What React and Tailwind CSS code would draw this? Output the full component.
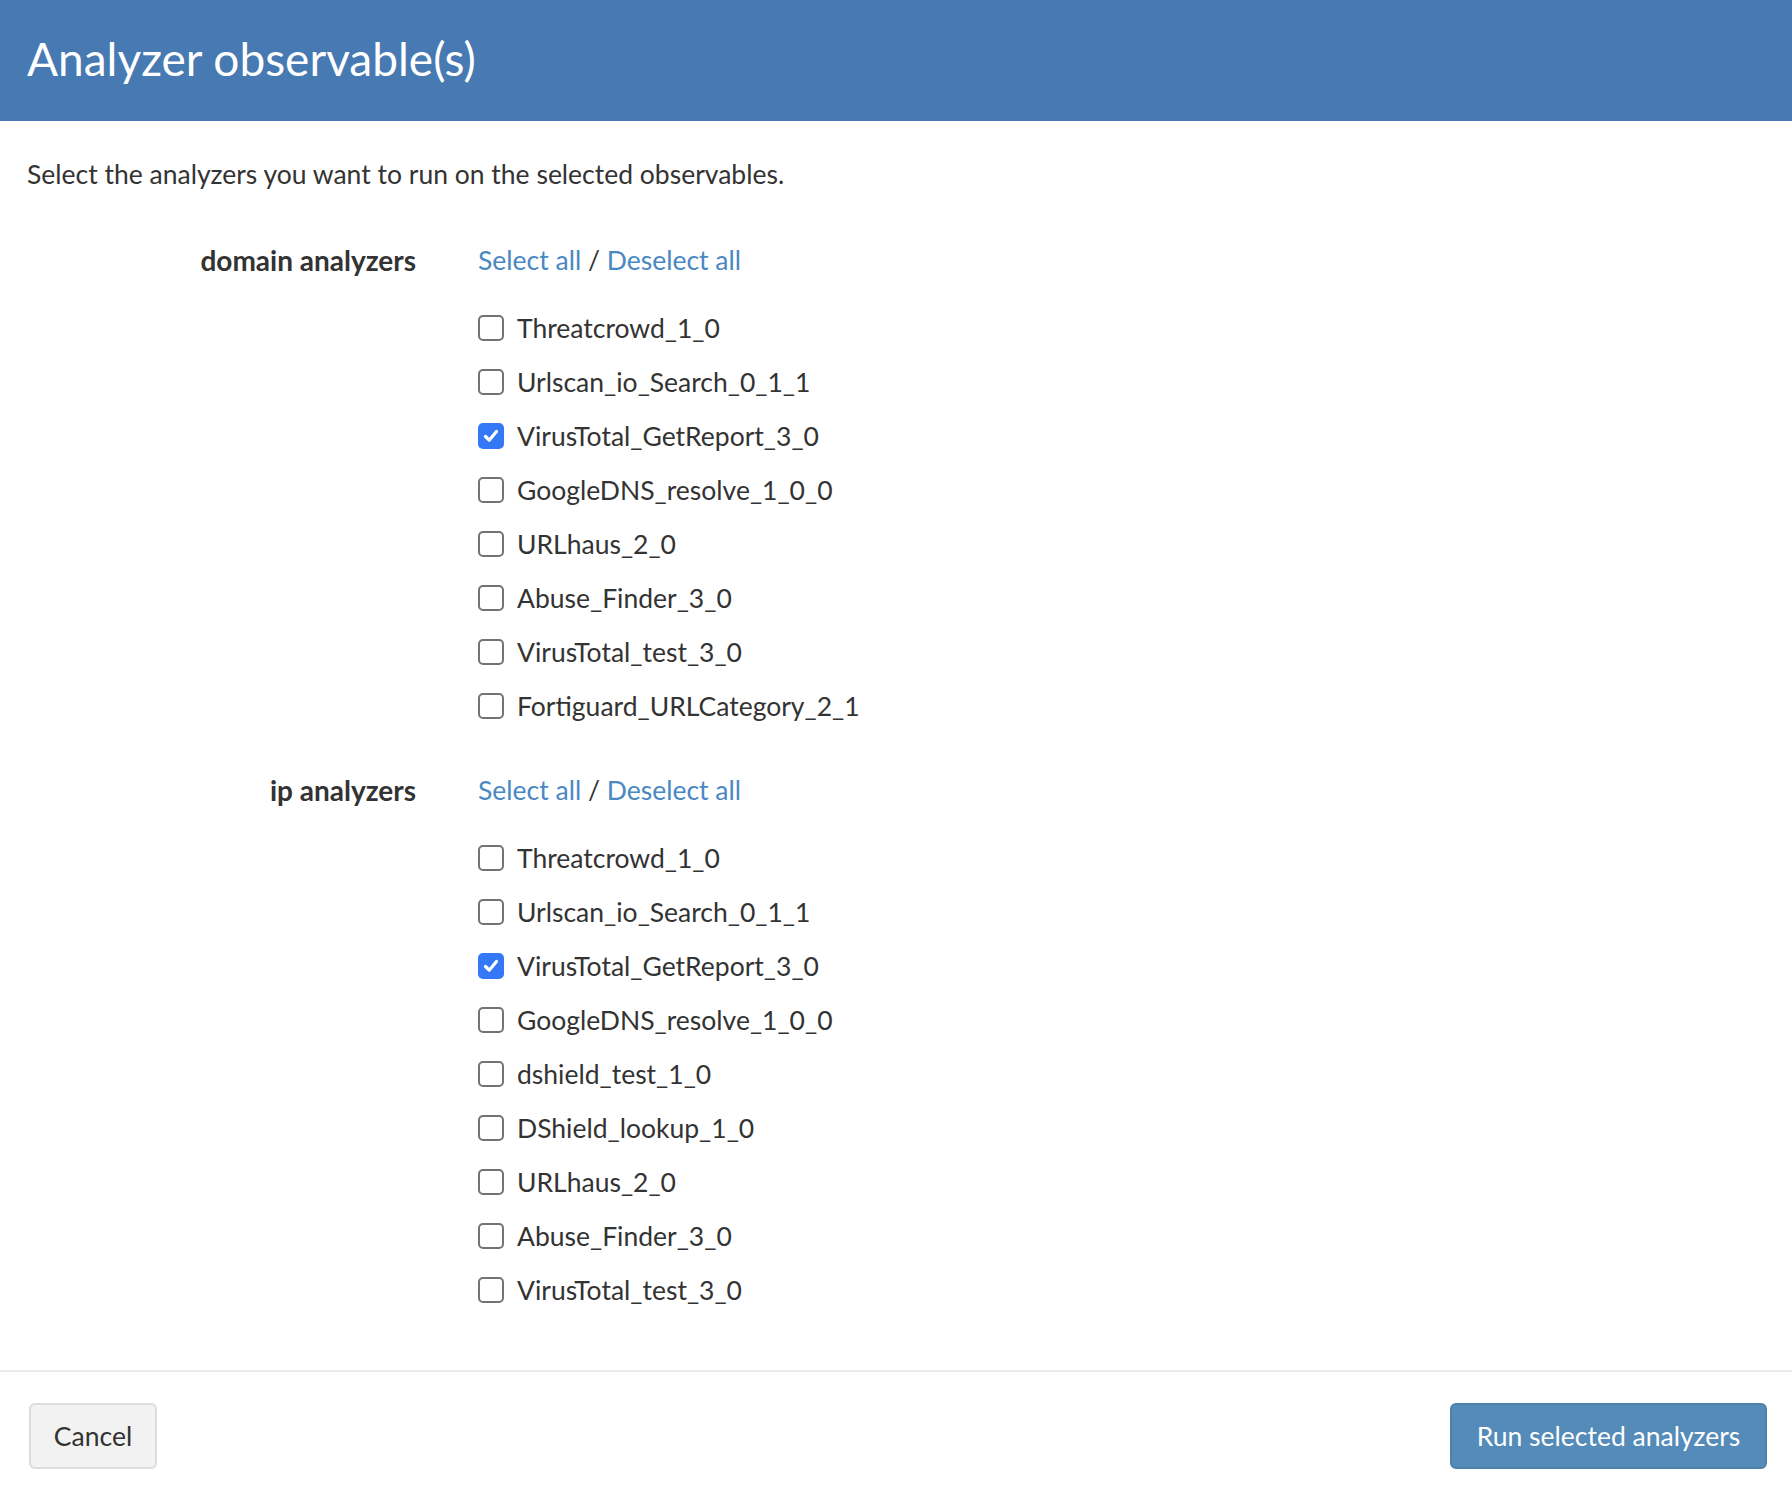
import React from "react";

const domain = [
  ["Threatcrowd_1_0", false],
  ["Urlscan_io_Search_0_1_1", false],
  ["VirusTotal_GetReport_3_0", true],
  ["GoogleDNS_resolve_1_0_0", false],
  ["URLhaus_2_0", false],
  ["Abuse_Finder_3_0", false],
  ["VirusTotal_test_3_0", false],
  ["Fortiguard_URLCategory_2_1", false],
];

const ip = [
  ["Threatcrowd_1_0", false],
  ["Urlscan_io_Search_0_1_1", false],
  ["VirusTotal_GetReport_3_0", true],
  ["GoogleDNS_resolve_1_0_0", false],
  ["dshield_test_1_0", false],
  ["DShield_lookup_1_0", false],
  ["URLhaus_2_0", false],
  ["Abuse_Finder_3_0", false],
  ["VirusTotal_test_3_0", false],
];

function Box({ checked }) {
  if (checked) {
    return (
      <span className="w-[26px] h-[26px] rounded-[5px] bg-[#3478f6] flex items-center justify-center shrink-0">
        <svg width="18" height="18" viewBox="0 0 18 18" fill="none">
          <path d="M3.5 9.5 L7.2 13.2 L14.5 4.5" stroke="white" strokeWidth="3.2" strokeLinecap="round" strokeLinejoin="round" />
        </svg>
      </span>
    );
  }
  return <span className="w-[26px] h-[26px] rounded-[5px] border-2 border-[#737373] bg-white shrink-0" />;
}

function Section({ title, items, first }) {
  return (
    <div className={first ? "" : "mt-[30px]"}>
      <div className="flex h-[54px] items-center">
        <div className="w-[416px] text-right font-bold text-[28px] text-[#333]">{title}</div>
        <div className="ml-[62px] text-[#333]">
          <span className="text-[#4a88c2]">Select all</span> / <span className="text-[#4a88c2]">Deselect all</span>
        </div>
      </div>
      <div className="mt-[14px] ml-[478px]">
        {items.map(([name, c], i) => (
          <div key={i} className="flex h-[54px] items-center gap-[13px]">
            <Box checked={c} />
            <span className="text-[#333]">{name}</span>
          </div>
        ))}
      </div>
    </div>
  );
}

export default function App() {
  return (
    <div className="w-[1792px] h-[1496px] bg-white text-[26.5px] leading-[40px] text-[#333] overflow-hidden" style={{ fontFamily: "Lato, 'Open Sans', sans-serif" }}>
      <div className="h-[121px] bg-[#4779b2] flex items-center px-[27px]">
        <h1 className="text-white text-[46px] leading-[56px] pb-[4px]">Analyzer observable(s)</h1>
      </div>
      <div className="pt-[33px] px-[27px]">Select the analyzers you want to run on the selected observables.</div>
      <div className="mt-[39px]">
        <Section title="domain analyzers" items={domain} first />
        <Section title="ip analyzers" items={ip} />
      </div>
      <div className="mt-[53px] border-t-2 border-[#ececec] pt-[31px] px-[25px] flex justify-between">
        <button className="ml-[4px] w-[128px] h-[66px] rounded-[6px] bg-[#f2f2f2] border-2 border-[#dcdcdc] text-[#333] text-[26.5px]">Cancel</button>
        <button className="w-[317px] h-[66px] rounded-[6px] bg-[#548bb8] border-2 border-[#4d80ab] text-white text-[26.5px]">Run selected analyzers</button>
      </div>
    </div>
  );
}
